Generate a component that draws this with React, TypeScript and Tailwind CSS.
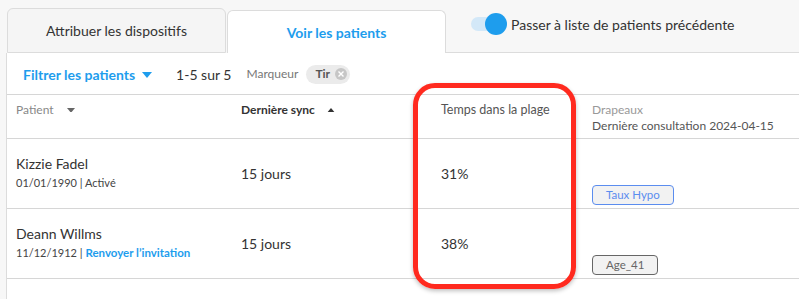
import React from "react";

const BLUE = "#1e9ded";

const CaretDown = ({ color = "#666", w = 8 }: { color?: string; w?: number }) => (
  <svg width={w} height={w * 0.6} viewBox="0 0 10 6" className="inline-block">
    <path d="M0 0 L10 0 L5 6 Z" fill={color} />
  </svg>
);

const CaretUp = ({ color = "#333", w = 8 }: { color?: string; w?: number }) => (
  <svg width={w} height={w * 0.6} viewBox="0 0 10 6" className="inline-block">
    <path d="M0 6 L10 6 L5 0 Z" fill={color} />
  </svg>
);

interface Row {
  name: string;
  dob: string;
  status: string;
  invite?: boolean;
  sync: string;
  tir: string;
  flag: string;
  flagTone: "blue" | "gray";
}

const rows: Row[] = [
  { name: "Kizzie Fadel", dob: "01/01/1990", status: "Activé", sync: "15 jours", tir: "31%", flag: "Taux Hypo", flagTone: "blue" },
  { name: "Deann Willms", dob: "11/12/1912", status: "Renvoyer l’invitation", invite: true, sync: "15 jours", tir: "38%", flag: "Age_41", flagTone: "gray" },
];

export default function App() {
  return (
    <div className="relative w-[799px] h-[299px] overflow-hidden bg-[#f7f7f7] font-['Lato','Noto_Sans',sans-serif] text-[#333]">
      {/* Tabs */}
      <div className="flex items-end h-[53px] pl-[7px]">
        <div className="w-[219px] h-[45px] flex items-center justify-center bg-[#f5f5f5] border border-[#dcdcdc] rounded-t-[6px] text-[14px] text-[#333]">
          Attribuer les dispositifs
        </div>
        <div className="ml-[1px] w-[219px] h-[43px] flex items-center justify-center bg-white border border-b-0 border-[#dcdcdc] rounded-t-[6px] text-[14px] font-bold" style={{ color: BLUE }}>
          Voir les patients
        </div>
        <div className="flex-1 self-stretch border-b border-[#dcdcdc] pl-[25px] pt-[13px]">
          <div className="flex items-center">
            <div className="relative w-[36px] h-[22px]">
              <div className="absolute left-0 top-[4px] w-[26px] h-[14px] rounded-full bg-[#d3e8f8]" />
              <div className="absolute left-[14px] top-0 w-[22px] h-[22px] rounded-full bg-[#1e9ded]" />
            </div>
            <span className="ml-[4px] text-[14px] text-[#333]">Passer à liste de patients précédente</span>
          </div>
        </div>
      </div>

      {/* Panel */}
      <div className="ml-[6px] border-l border-[#dcdcdc] bg-white h-[246px]">
        {/* Filter row */}
        <div className="flex items-center h-[42px] pl-[16px] pt-[1px] border-b border-[#d6d6d6]">
          <span className="text-[14px] font-bold" style={{ color: BLUE }}>Filtrer les patients</span>
          <span className="ml-[7px] mb-[2px]"><CaretDown color={BLUE} w={10} /></span>
          <span className="ml-[24px] text-[14px] text-[#333]">1-5 sur 5</span>
          <span className="ml-[15px] text-[12px] text-[#777]">Marqueur</span>
          <span className="ml-[8px] flex items-center h-[19px] rounded-full bg-[#ebebeb] pl-[9px] pr-[3px] gap-[5px]">
            <span className="text-[12px] font-bold text-[#555]">Tir</span>
            <span className="w-[12px] h-[12px] rounded-full bg-[#c6c6c6] flex items-center justify-center">
              <svg width="6" height="6" viewBox="0 0 6 6">
                <path d="M0.5 0.5 L5.5 5.5 M5.5 0.5 L0.5 5.5" stroke="#fff" strokeWidth="1.4" />
              </svg>
            </span>
          </span>
        </div>

        {/* Header */}
        <div className="grid grid-cols-[225px_200px_151px_1fr] items-start pl-[9px] h-[44px] border-b border-[#d6d6d6] pt-[7px] text-[12px] leading-[16px]">
          <div className="flex items-center h-[16px] gap-[13px] text-[#888]">
            Patient <CaretDown color="#666" w={8} />
          </div>
          <div className="flex items-center h-[16px] gap-[12px] font-bold text-[#333]">
            Dernière sync <CaretUp color="#333" w={8} />
          </div>
          <div className="text-[12.5px] text-[#555]">Temps dans la plage</div>
          <div className="flex flex-col">
            <span className="text-[#999]">Drapeaux</span>
            <span className="text-[#555]">Dernière consultation 2024-04-15</span>
          </div>
        </div>

        {/* Rows */}
        {rows.map((r) => (
          <div key={r.name} className="grid grid-cols-[225px_200px_151px_1fr] pl-[9px] h-[70px] border-b border-[#d6d6d6]">
            <div className="flex flex-col pt-[15px]">
              <span className="text-[14px] leading-[20px] text-[#333]">{r.name}</span>
              <span className="text-[11px] leading-[16px] mt-[1px] text-[#444]">
                {r.dob} |{" "}
                <span className={r.invite ? "font-bold text-[11.5px] text-[#1e9ded]" : ""}>{r.status}</span>
              </span>
            </div>
            <div className="flex items-center text-[14px] text-[#333]">{r.sync}</div>
            <div className="flex items-center text-[14px] text-[#333]">{r.tir}</div>
            <div className="flex flex-col items-start pt-[46px]">
              <span
                className={
                  r.flagTone === "blue"
                    ? "flex items-center h-[20px] px-[13px] rounded-[4px] border border-[#5b8def] bg-[#f2f2f2] text-[11.5px] text-[#5b8def]"
                    : "flex items-center h-[20px] px-[13px] rounded-[4px] border border-[#666] bg-[#f2f2f2] text-[11.5px] text-[#666]"
                }
              >
                {r.flag}
              </span>
            </div>
          </div>
        ))}
      </div>

      {/* Annotation highlight */}
      <div className="absolute left-[413px] top-[83px] w-[163px] h-[206px] rounded-[22px] border-[5px] border-[#ff2a1f] shadow-[0_2px_4px_rgba(0,0,0,0.25)]" />
    </div>
  );
}
